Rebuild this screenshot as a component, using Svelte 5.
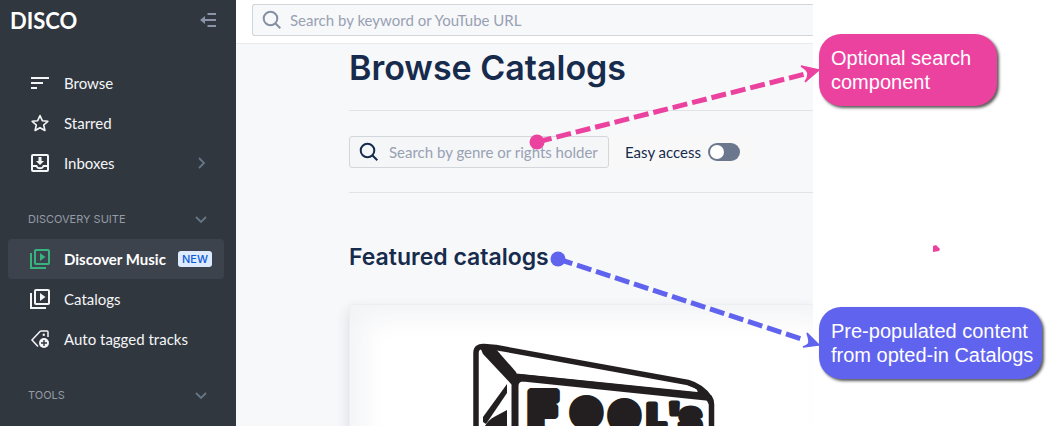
<script lang="ts">
  let easyAccess = $state(false);
  let keyword = $state("");
  let genre = $state("");

  const library = [
    { label: "Browse", icon: "browse" },
    { label: "Starred", icon: "star" },
    { label: "Inboxes", icon: "inbox", more: true },
  ];

  const suite = [
    { label: "Discover Music", icon: "library", active: true, badge: "NEW" },
    { label: "Catalogs", icon: "library" },
    { label: "Auto tagged tracks", icon: "tag" },
  ];
</script>

{#snippet icon(name)}
  <svg class="icon" viewBox="0 0 20 20" fill="none" stroke="currentColor" stroke-width="2">
    {#if name == "browse"}
      <path d="M1 5h18M1 10h12M1 15h6" />
    {:else if name == "star"}
      <path
        d="M10 2.6l2.3 5.1 5.5.6-4.1 3.7 1.2 5.5-4.9-2.8-4.9 2.8 1.2-5.5-4.1-3.7 5.5-.6z"
        stroke-width="1.6"
        stroke-linejoin="round"
      />
    {:else if name == "inbox"}
      <rect x="2" y="2" width="16" height="16" rx="1" />
      <path d="M2 13h4.5c1 3 6 3 7 0h4.5" stroke-width="1.8" />
      <path d="M8.500 4h3v4h2.500l-4 4-4-4h2.500z" fill="currentColor" stroke="none" />
    {:else if name == "library"}
      <rect x="5" y="1" width="14" height="14" rx="1" />
      <path d="M1 4v15h15" />
      <path d="M10 4v8l5.500-4z" fill="currentColor" stroke="none" />
    {:else if name == "tag"}
      <path d="M8 17.500l-6-6.500 8-8.500q.6-.6 1.500-.6h5.500q1 0 1 1v5" stroke-width="1.5" />
      <circle cx="13.8" cy="5.8" r="1.2" fill="currentColor" stroke="none" />
      <circle cx="14" cy="14" r="5" fill="currentColor" stroke="none" />
      <path d="M14 11v6M11 14h6" stroke="#31373f" stroke-width="1.4" />
    {:else if name == "search"}
      <circle cx="8.500" cy="8.500" r="6.8" />
      <path d="M13.300 13.300l5 5" />
    {/if}
  </svg>
{/snippet}

{#snippet chevron(down)}
  <svg class="chevron" viewBox="0 0 12 12" fill="none" stroke="currentColor" stroke-width="1.8">
    {#if down}
      <path d="M1 4l5 5 5-5" />
    {:else}
      <path d="M4 1l5 5-5 5" />
    {/if}
  </svg>
{/snippet}

{#snippet row(item)}
  <a href="#{item.icon}" class="row" class:active={item.active}>
    {@render icon(item.icon)}
    <span class="label">{item.label}</span>
    {#if item.badge}
      <span class="badge">{item.badge}</span>
    {/if}
    {#if item.more}
      {@render chevron(false)}
    {/if}
  </a>
{/snippet}

<div class="page">
  <aside>
    <div class="brand">
      <span class="logo">DISCO</span>
      <button class="collapse" aria-label="Collapse sidebar">
        <svg viewBox="0 0 16 14" fill="none" stroke="currentColor" stroke-width="2">
          <path d="M7.500 1H16M4 7h12M7.500 13H16" />
          <path d="M0 7l5-4v8z" fill="currentColor" stroke="none" />
        </svg>
      </button>
    </div>
    <nav>
      {#each library as item}
        {@render row(item)}
      {/each}
      <button class="section">DISCOVERY SUITE {@render chevron(true)}</button>
      {#each suite as item}
        {@render row(item)}
      {/each}
      <button class="section">TOOLS {@render chevron(true)}</button>
    </nav>
  </aside>

  <main>
    <header>
      <label class="search top">
        {@render icon("search")}
        <input
          type="text"
          aria-label="Search"
          placeholder="Search by keyword or YouTube URL"
          bind:value={keyword}
        />
      </label>
    </header>
    <div class="content">
      <h1>Browse Catalogs</h1>
      <div class="filters">
        <label class="search genre">
          {@render icon("search")}
          <input
            type="text"
            aria-label="Search catalogs"
            placeholder="Search by genre or rights holder"
            bind:value={genre}
          />
        </label>
        <label class="easy">
          Easy access
          <input type="checkbox" role="switch" bind:checked={easyAccess} />
        </label>
      </div>
      <h2>Featured catalogs</h2>
      <div class="card">
        <svg class="art" viewBox="0 0 270 160" fill="none" stroke="#231f20" stroke-linejoin="round">
          <path d="M16 160V23q0-7 8-6.500l12 1L228 52.500q14 4 22 16q1.500 2 1.500 6V160" stroke-width="5.5" />
          <path d="M55 160V56q0-8 8-8L246 67" stroke-width="7" />
          <path d="M20 17l15 1 21 24 3 8-7 5L23 24z" fill="#231f20" stroke="none" />
          <path d="M56 45L242 64q-1-6-13-10" stroke-width="3" />
          <path d="M236 56l16 10v14l-5-9-8-4z" fill="#231f20" stroke="none" />
          <path d="M47 54v9L26 94l-3-2v-5z" fill="#231f20" stroke="none" />
          <path d="M47 80v35H24V98q3-7 10-11z" fill="#231f20" stroke="none" />
          <text class="wordmark" fill="#231f20" stroke="#231f20">
            <tspan class="f" x="69" y="97">F</tspan><tspan class="o" x="114" y="94">O</tspan><tspan
              class="o"
              x="152"
              y="97">O</tspan
            ><tspan class="l" x="187" y="99">L</tspan><tspan class="l" x="208" y="98">'</tspan><tspan
              class="l"
              x="219"
              y="103">S</tspan
            >
          </text>
        </svg>
      </div>
    </div>
  </main>

  <section class="notes">
    <svg class="arrows" viewBox="0 0 1062 426" fill="none" stroke-width="5">
      <g stroke="#ec429f">
        <circle cx="537" cy="142" r="7.5" fill="#ec429f" stroke="none" />
        <path d="M537 142L805 74" stroke-dasharray="15 5" />
        <path d="M819 70l-18-4q7 4 7 8t-3 8z" fill="#ec429f" stroke-width="1.5" />
        <path d="M933 246l3-1 4 4-1 2-6 1z" fill="#ec429f" stroke="none" />
      </g>
      <g stroke="#6063ee">
        <circle cx="558" cy="259" r="7.5" fill="#6063ee" stroke="none" />
        <path d="M558 259L803 339.500" stroke-dasharray="15 5" />
        <path d="M819 345l-12-12q2 6 2 9t-6 5z" fill="#6063ee" stroke-width="1.5" />
      </g>
    </svg>
    <p class="note pink">Optional search<br />component</p>
    <p class="note violet">Pre-populated content<br />from opted-in Catalogs</p>
  </section>
</div>

<style>
  :global(body) {
    margin: 0;
    background: #fff;
  }
  .page {
    position: relative;
    display: grid;
    grid-template-columns: 236px 1fr 249px;
    height: 100vh;
    overflow: hidden;
    font-family: Lato, "Liberation Sans", sans-serif;
    font-size: 15px;
    color: #172b4d;
  }
  button,
  input {
    font: inherit;
    color: inherit;
    border: none;
    background: none;
    margin: 0;
    padding: 0;
  }
  .icon {
    width: 20px;
    height: 20px;
    flex: none;
  }
  .chevron {
    width: 12px;
    height: 12px;
    margin-right: 5px;
    color: #667587;
  }

  aside {
    background: #31373f;
    color: #fff;
  }
  .brand {
    display: flex;
    align-items: center;
    justify-content: space-between;
    height: 40px;
    padding: 0 20px 0 10px;
  }
  .logo {
    font-size: 22px;
    font-weight: 700;
  }
  .collapse {
    color: #8993a9;
  }
  .collapse svg {
    display: block;
    width: 16px;
    height: 14px;
  }
  nav {
    padding: 23px 12px 0 8px;
  }
  .row {
    display: flex;
    align-items: center;
    gap: 14px;
    height: 40px;
    padding: 0 12px 0 22px;
    border-radius: 4px;
    color: #f4f5f7;
    text-decoration: none;
  }
  .label {
    flex: 1;
    min-width: 0;
    white-space: nowrap;
  }
  .active {
    background: #3d434d;
    font-weight: 700;
    color: #fff;
  }
  .active .icon {
    color: #36b37e;
  }
  .badge {
    padding: 0 4px;
    border-radius: 3px;
    background: #deebff;
    color: #0f5bd7;
    font-family: Inter, sans-serif;
    font-size: 11px;
    font-weight: 500;
    line-height: 16px;
  }
  .section {
    display: flex;
    align-items: center;
    justify-content: space-between;
    width: 100%;
    height: 40px;
    margin-top: 16px;
    padding: 0 12px 0 20px;
    font-family: Inter, sans-serif;
    font-size: 11px;
    color: #949ba6;
  }

  main {
    min-width: 0;
    overflow: hidden;
    background: #f7f8fa;
  }
  header {
    padding: 4px 0 7px 16px;
    background: #fff;
    border-bottom: 1px solid #e8eaed;
  }
  .search {
    display: flex;
    align-items: center;
    gap: 8px;
    box-sizing: border-box;
    height: 32px;
    padding: 0 9px;
    border: 1px solid #d3d6da;
    border-radius: 3px;
  }
  .search input {
    flex: 1;
    min-width: 0;
    outline: none;
  }
  .search input::placeholder {
    color: #98a1b3;
    opacity: 1;
  }
  .top {
    background: #f7f8fa;
    border-right: none;
    border-radius: 3px 0 0 3px;
    color: #8590a2;
  }
  .genre {
    width: 260px;
    gap: 10px;
    background: #f5f6f8;
  }
  .content {
    padding-left: 113px;
  }
  h1,
  h2 {
    margin: 0;
    font-family: Inter, sans-serif;
    font-weight: 600;
    white-space: nowrap;
  }
  h1 {
    font-size: 34px;
    line-height: 48px;
    padding-bottom: 18px;
  }
  .filters {
    display: flex;
    align-items: center;
    padding: 25px 0 24px;
    border: solid #e1e3e6;
    border-width: 1px 0;
  }
  .easy {
    display: flex;
    align-items: center;
    gap: 7px;
    height: 32px;
    padding: 0 15px 0 16px;
    background: #f8f8f9;
    white-space: nowrap;
  }
  .easy input {
    appearance: none;
    width: 32px;
    height: 18px;
    border-radius: 9px;
    background: #6b778c;
  }
  .easy input::before {
    content: "";
    display: block;
    width: 14px;
    height: 14px;
    margin: 2px;
    border-radius: 50%;
    background: #fff;
  }
  .easy input:checked {
    background: #36b37e;
  }
  .easy input:checked::before {
    margin-left: 16px;
  }
  h2 {
    padding: 48px 0 31px;
    font-size: 23px;
    line-height: 32px;
  }
  .card {
    border: 1px solid #eceef0;
    border-right: none;
    border-radius: 4px 0 0 0;
    background: #fff;
    box-shadow:
      0 6px 14px rgba(23, 43, 77, 0.14),
      inset 14px 14px 26px rgba(23, 43, 77, 0.05);
  }
  .art {
    display: block;
    width: 270px;
    height: 160px;
    margin: 25px auto 0 110px;
  }
  .wordmark {
    font-family: Inter, sans-serif;
    font-weight: 900;
  }
  .f {
    font-size: 48px;
    stroke-width: 8px;
  }
  .o {
    font-size: 32px;
    stroke-width: 12px;
  }
  .l {
    font-size: 34px;
    stroke-width: 5px;
  }

  .arrows {
    position: absolute;
    top: 0;
    right: 0;
    width: 1062px;
    height: 426px;
    pointer-events: none;
  }
  .note {
    position: absolute;
    margin: 0;
    box-sizing: border-box;
    padding: 12px;
    border-radius: 22px;
    box-shadow: 2px 2px 3px rgba(0, 0, 0, 0.65);
    color: #fff;
    font-family: "Liberation Sans", Arial, sans-serif;
    font-size: 20px;
    line-height: 24px;
    white-space: nowrap;
  }
  .pink {
    top: 34px;
    right: 65px;
    width: 178px;
    background: #ec429f;
  }
  .violet {
    top: 307px;
    right: 20px;
    width: 223px;
    background: #6063ee;
  }
</style>
